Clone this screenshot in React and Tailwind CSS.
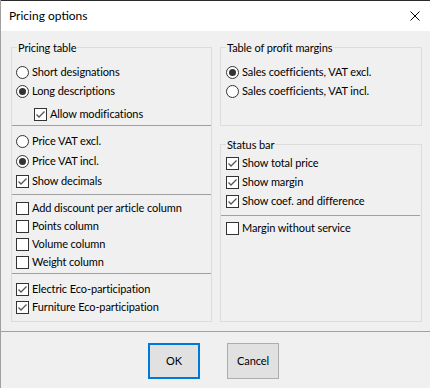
function Radio({ checked }) {
  return (
    <span className="flex h-[13px] w-[13px] shrink-0 items-center justify-center rounded-full border border-[#333333] bg-white">
      {checked && <span className="h-[7px] w-[7px] rounded-full bg-[#333333]" />}
    </span>
  );
}

function Check({ checked }) {
  return (
    <span className="flex h-[13px] w-[13px] shrink-0 items-center justify-center border border-[#333333] bg-white">
      {checked && (
        <svg width="11" height="11" viewBox="0 0 11 11">
          <path d="M1.5 5.5 L4 8 L9.5 2.5" fill="none" stroke="#555555" strokeWidth="1.3" />
        </svg>
      )}
    </span>
  );
}

function Option({ type, checked, label, className = "h-[18px]" }) {
  return (
    <div className={`flex items-center gap-[3px] ${className}`}>
      {type === "radio" ? <Radio checked={checked} /> : <Check checked={checked} />}
      <span className="whitespace-nowrap">{label}</span>
    </div>
  );
}

function Group({ title, className, children }) {
  return (
    <div className={`relative flex flex-col border border-[#dcdcdc] ${className}`}>
      <span className="absolute -top-[7px] left-[5px] bg-[#f0f0f0] px-[1px] leading-[14px]">{title}</span>
      {children}
    </div>
  );
}

export default function App() {
  return (
    <div className="flex h-[388px] w-[430px] flex-col overflow-hidden border-l border-[#a0a0a0] bg-[#f0f0f0] text-[11px] tracking-[-0.1px] text-black [font-family:Lato,sans-serif]">
      <div className="flex h-[31px] shrink-0 items-center justify-between border-t border-[#2b2b2b] bg-white pl-[8px] pr-[10px]">
        <span className="text-[12px] tracking-normal">Pricing options</span>
        <svg width="10" height="10" viewBox="0 0 10 10">
          <path d="M0.5 0.5 L9.5 9.5 M9.5 0.5 L0.5 9.5" stroke="#000" strokeWidth="1" />
        </svg>
      </div>

      <div className="flex h-[300px] shrink-0 gap-[8px] pl-[10px] pt-[16px]">
        <Group title="Pricing table" className="h-[275px] w-[201px]">
          <div className="border-b border-[#a0a0a0] pb-[2px] pl-[4px] pt-[15px]">
            <Option type="radio" label="Short designations" />
            <Option type="radio" checked label="Long descriptions" className="mt-[1px] h-[18px]" />
            <Option type="check" checked label="Allow modifications" className="ml-[18px] mt-[5px] h-[18px]" />
          </div>
          <div className="border-b border-[#a0a0a0] pb-[3px] pl-[4px] pt-[5px]">
            <Option type="radio" label="Price VAT excl." className="h-[20px]" />
            <Option type="radio" checked label="Price VAT incl." className="h-[20px]" />
            <Option type="check" checked label="Show decimals" className="h-[20px]" />
          </div>
          <div className="border-b border-[#a0a0a0] pb-[2px] pl-[4px] pt-[4px]">
            <Option type="check" label="Add discount per article column" />
            <Option type="check" label="Points column" />
            <Option type="check" label="Volume column" />
            <Option type="check" label="Weight column" />
          </div>
          <div className="pl-[4px] pt-[6px]">
            <Option type="check" checked label="Electric Eco-participation" />
            <Option type="check" checked label="Furniture Eco-participation" />
          </div>
        </Group>

        <div className="flex w-[202px] flex-col">
          <Group title="Table of profit margins" className="h-[79px] pl-[5px] pt-[15px]">
            <Option type="radio" checked label="Sales coefficients, VAT excl." />
            <Option type="radio" label="Sales coefficients, VAT incl." className="mt-[1px] h-[18px]" />
          </Group>
          <Group title="Status bar" className="mt-[18px] h-[178px]">
            <div className="mr-[1px] border-b border-[#a0a0a0] pb-[4px] pl-[5px] pt-[9px]">
              <Option type="check" checked label="Show total price" className="h-[19px]" />
              <Option type="check" checked label="Show margin" className="h-[19px]" />
              <Option type="check" checked label="Show coef. and difference" className="h-[19px]" />
            </div>
            <div className="pl-[5px] pt-[3px]">
              <Option type="check" label="Margin without service" />
            </div>
          </Group>
        </div>
      </div>

      <div className="flex flex-1 gap-[27px] border-t border-[#a0a0a0] pl-[147px] pt-[11px]">
        <button className="flex h-[36px] w-[52px] items-center justify-center border-2 border-[#0078d7] bg-[#e1e1e1]">
          OK
        </button>
        <button className="flex h-[36px] w-[52px] items-center justify-center border border-[#adadad] bg-[#e1e1e1]">
          Cancel
        </button>
      </div>
    </div>
  );
}
